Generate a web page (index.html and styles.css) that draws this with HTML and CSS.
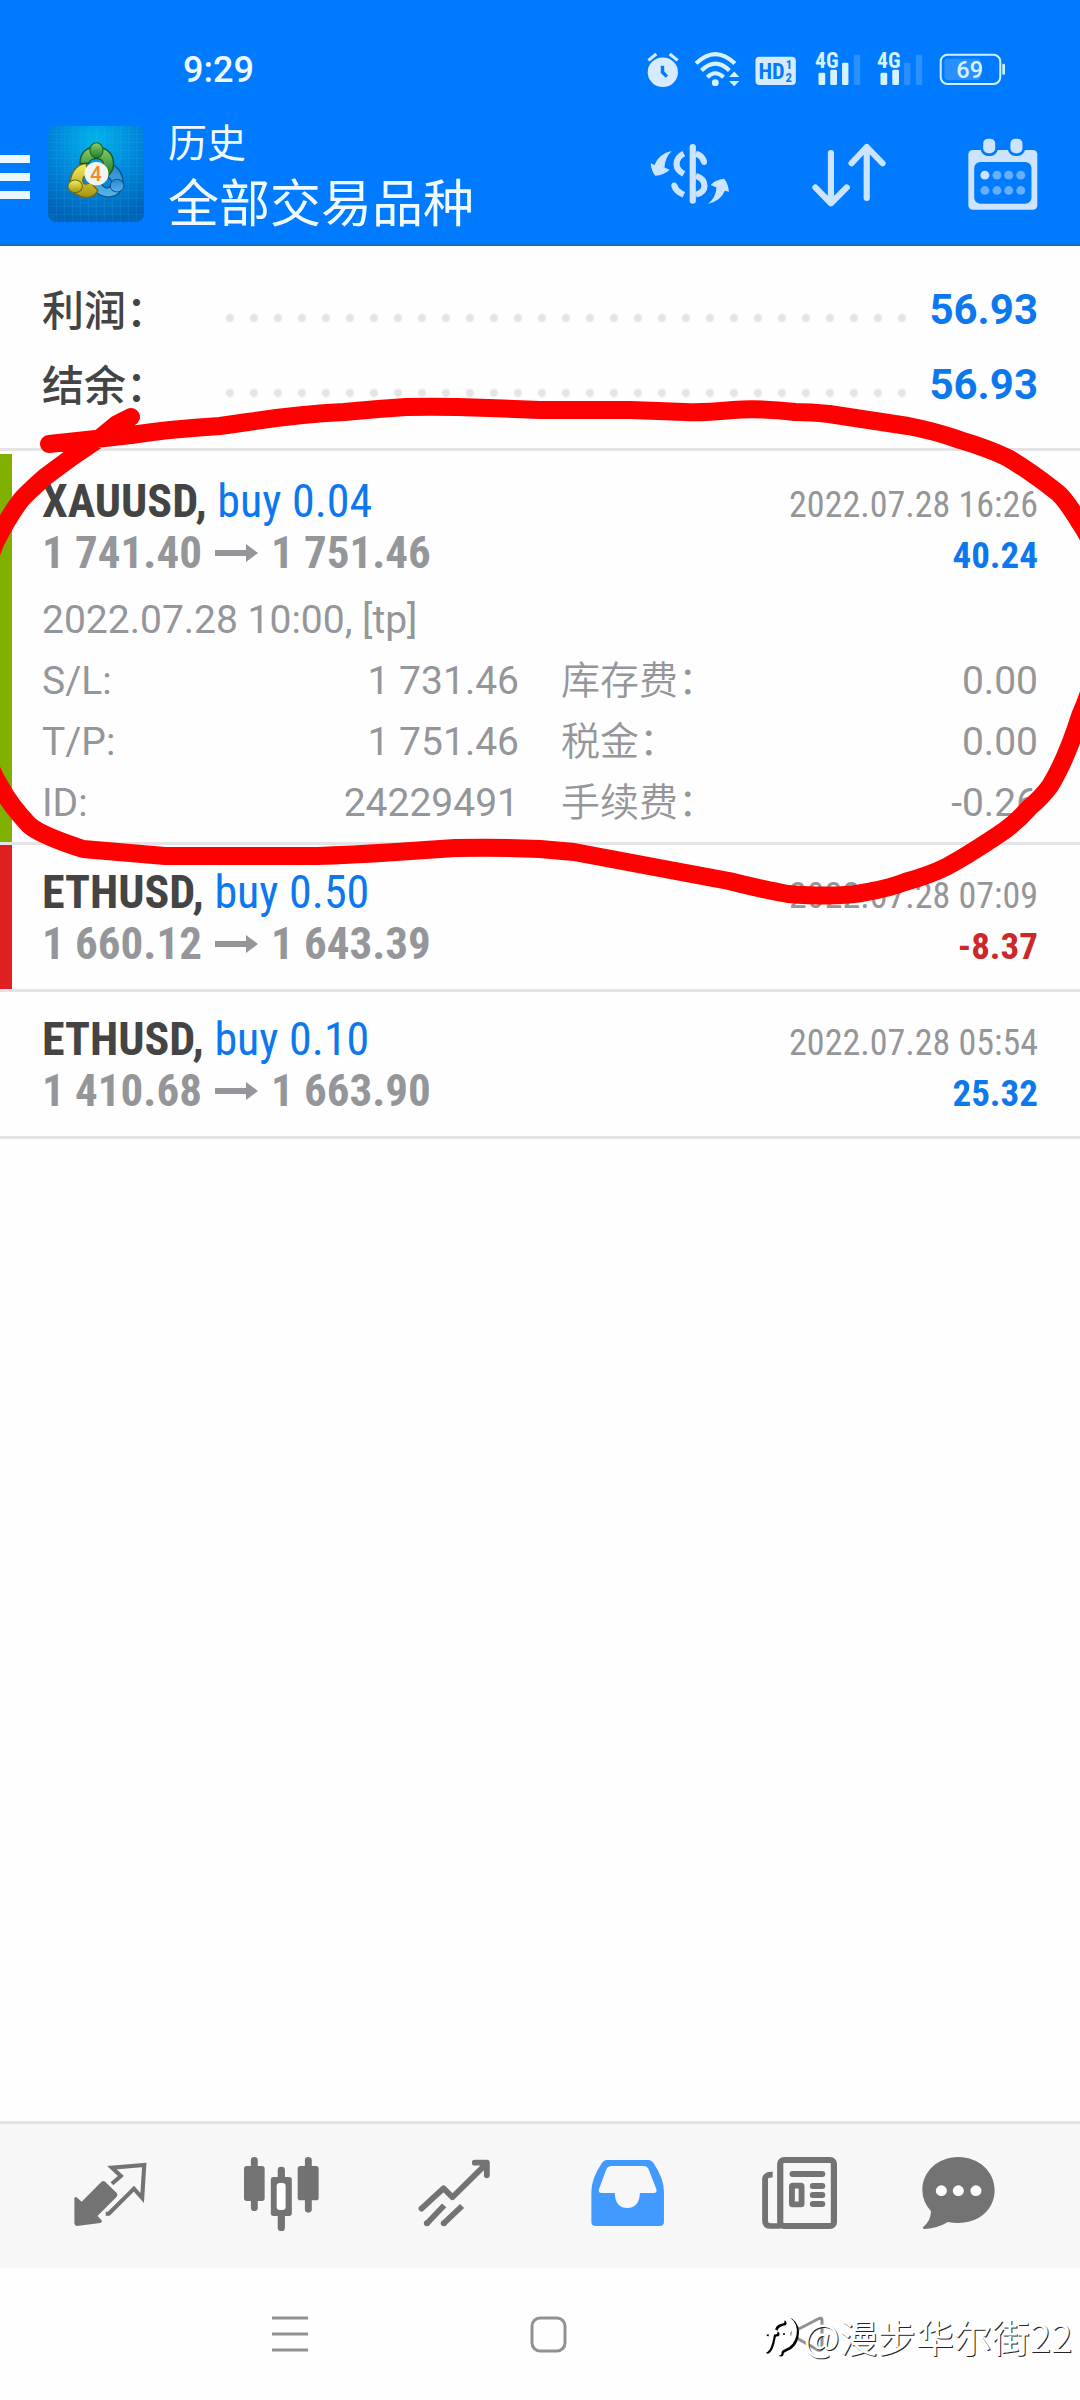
FILE: index.html
```html
<!DOCTYPE html>
<html lang="zh-CN">
<head>
    <meta charset="UTF-8" />
    <meta name="viewport" content="width=device-width, initial-scale=1.0"/>
    <title>历史</title>
    <link rel="stylesheet" href="styles.css">
</head>
<body>
<header class="header">
    <div class="status-bar">
        <time class="clock">9:29</time>
        <div class="status-icons">
            <svg width="32" height="35" viewBox="311 154 93 104" preserveAspectRatio="none">
                <circle cx="357" cy="214" r="44" fill="#d6ebff"/>
                <path d="M315 179L338 160M400 179L377 160" stroke="#d6ebff" stroke-width="9"/>
                <path d="M356 195V214L369 227" fill="none" stroke="#007aff" stroke-width="10"/>
            </svg>
            <svg width="44" height="35" viewBox="450 154 128 104" preserveAspectRatio="none">
                <g fill="none" stroke="#d6f2ff" stroke-width="12">
                    <path d="M453 188Q509 132 566 188"/>
                    <path d="M469 209Q509 168 550 209"/>
                    <path d="M486 229Q509 205 533 229"/>
                </g>
                <circle cx="509" cy="245" r="10" fill="#d6f2ff"/>
                <path d="M549 228L564 212L579 228ZM549 240L564 256L579 240Z" fill="#d6f2ff"/>
            </svg>
            <svg width="44" height="35" viewBox="621 154 128 104">
                <rect x="621" y="168" width="120" height="84" rx="12" fill="#d6ebff"/>
                <g class="hd-text">
                    <text x="630" y="233" font-size="66">HD</text>
                    <text x="711" y="206" font-size="38">1</text>
                    <text x="710" y="242" font-size="38">2</text>
                </g>
            </svg>
            <svg width="46" height="35" viewBox="793 154 134 104">
                <text class="net-text" x="792" y="202" font-size="64">4G</text>
                <g fill="#d6f2ff">
                    <rect x="802" y="216" width="20" height="36" rx="4"/>
                    <rect x="837" y="207" width="20" height="45" rx="4"/>
                    <rect x="872" y="186" width="19" height="66" rx="4"/>
                </g>
                <rect x="907" y="162" width="19" height="90" rx="4" fill="#2b90ff"/>
            </svg>
            <svg width="46" height="35" viewBox="793 154 134 104">
                <text class="net-text" x="792" y="202" font-size="64">4G</text>
                <g fill="#d6f2ff">
                    <rect x="802" y="216" width="20" height="36" rx="4"/>
                    <rect x="837" y="207" width="20" height="45" rx="4"/>
                </g>
                <g fill="#2b90ff">
                    <rect x="872" y="186" width="19" height="66" rx="4"/>
                    <rect x="907" y="162" width="19" height="90" rx="4"/>
                </g>
            </svg>
            <svg width="67" height="35" viewBox="1156 154 195 104">
                <rect x="1159" y="162" width="177" height="87" rx="20" fill="none" stroke="#d0f0ff" stroke-width="6"/>
                <rect x="1170" y="174" width="108" height="63" rx="10" fill="#2b90ff"/>
                <rect x="1342" y="189" width="8" height="33" rx="4" fill="#d0f0ff"/>
                <text class="battery-text" x="1245" y="231" font-size="70">69</text>
            </svg>
        </div>
    </div>

    <div class="app-bar">
        <button class="btn-menu" aria-label="菜单"><span></span><span></span><span></span></button>
        <svg class="app-icon" viewBox="139 381 288 288">
            <defs>
                <radialGradient id="bg" cx="50%" cy="15%" r="85%">
                    <stop offset="0" stop-color="#00b4ea"/>
                    <stop offset="0.5" stop-color="#0089dc"/>
                    <stop offset="1" stop-color="#0064b8"/>
                </radialGradient>
                <linearGradient id="green" x2="0" y2="1">
                    <stop offset="0" stop-color="#8fd06a"/>
                    <stop offset="1" stop-color="#1d7d2a"/>
                </linearGradient>
                <linearGradient id="yellow" x2="0" y2="1">
                    <stop offset="0" stop-color="#f6ee62"/>
                    <stop offset="1" stop-color="#a39410"/>
                </linearGradient>
                <linearGradient id="blue" x2="0" y2="1">
                    <stop offset="0" stop-color="#2c86cc"/>
                    <stop offset="1" stop-color="#55b4ea"/>
                </linearGradient>
            </defs>
            <rect x="139" y="381" width="288" height="288" rx="24" fill="url(#bg)"/>
            <path d="M164 381V669M188 381V669M212 381V669M236 381V669M260 381V669M284 381V669M308 381V669M332 381V669M356 381V669M380 381V669M404 381V669M139 406H427M139 430H427M139 454H427M139 478H427M139 502H427M139 526H427M139 550H427M139 574H427M139 598H427M139 622H427M139 646H427" stroke="#5fd0ff" stroke-opacity="0.16" stroke-width="2"/>
            <g transform="translate(-4 0) scale(1.03 1)">
                <path d="M325 496Q358 512 358 556Q352 594 310 594Q278 590 262 556L292 550Q308 578 322 560Q330 548 314 534Z" fill="url(#blue)" stroke="#0d5796" stroke-width="4"/>
                <path d="M250 492Q205 500 202 560Q214 592 252 596Q276 594 284 574L262 550Q244 562 240 546Q240 530 254 528Z" fill="url(#yellow)" stroke="#6d6a12" stroke-width="4"/>
                <path d="M232 494Q232 446 280 444Q328 448 330 494Q328 520 314 528L300 500Q302 480 280 478Q262 480 258 492Z" fill="url(#green)" stroke="#145d26" stroke-width="4"/>
                <ellipse cx="280" cy="454" rx="19" ry="23" fill="url(#green)" stroke="#145d26" stroke-width="3"/>
                <ellipse cx="218" cy="562" rx="21" ry="19" fill="url(#yellow)" stroke="#6d6a12" stroke-width="3"/>
                <ellipse cx="340" cy="560" rx="20" ry="19" fill="url(#blue)" stroke="#0d5796" stroke-width="3"/>
                <circle cx="280" cy="524" r="35" fill="#f3f3f1"/>
            </g>
            <text class="app-icon-text" x="283" y="547" font-size="62">4</text>
        </svg>
        <div class="titles">
            <p class="section">历史</p>
            <h1 class="symbol-filter">全部交易品种</h1>
        </div>
        <div class="actions">
            <button aria-label="货币">
                <svg width="80" height="73" viewBox="320 411 232 220" preserveAspectRatio="none">
                    <g fill="none" stroke="#cce4ff" stroke-width="18">
                        <path d="M444 438V600" stroke-linecap="round"/>
                        <path d="M453 458Q472 464 477 484M390 553Q395 572 418 582"/>
                        <path d="M418 458Q397 468 397 490Q397 508 418 519M453 525Q478 533 478 555Q478 575 453 582"/>
                    </g>
                    <g fill="#cce4ff">
                        <circle cx="477" cy="484" r="8"/>
                        <circle cx="390" cy="553" r="8"/>
                        <path d="M383 450Q346 458 333 492L322 487Q324 510 335 525Q360 524 377 507L362 500Q363 470 383 450Z"/>
                        <path d="M489 609Q511 590 513 560L496 553Q510 536 535 534Q547 550 549 573L537 570Q526 600 489 609Z"/>
                    </g>
                </svg>
            </button>
            <button aria-label="排序">
                <svg width="74" height="73" viewBox="781 411 215 220" preserveAspectRatio="none" fill="none" stroke="#cce4ff" stroke-width="18" stroke-linecap="round" stroke-linejoin="round">
                    <path d="M836 456V608M791 560L836 608L882 560M940 592V438M896 487L940 438L986 487"/>
                </svg>
            </button>
            <button aria-label="日期">
                <svg width="70" height="73" viewBox="1242 411 203 220" preserveAspectRatio="none">
                    <rect x="1243" y="447" width="200" height="180" rx="13" fill="#cce4ff"/>
                    <rect x="1260" y="483" width="166" height="126" rx="18" fill="#007aff"/>
                    <g fill="#cce4ff" stroke="#007aff" stroke-width="8">
                        <rect x="1282" y="409" width="43" height="52" rx="19"/>
                        <rect x="1361" y="409" width="43" height="52" rx="19"/>
                    </g>
                    <g fill="#66afff">
                        <circle cx="1291" cy="523" r="13" fill="#cce4ff"/>
                        <circle cx="1326" cy="523" r="13"/>
                        <circle cx="1360" cy="523" r="13"/>
                        <circle cx="1395" cy="523" r="13"/>
                        <circle cx="1291" cy="569" r="13"/>
                        <circle cx="1326" cy="569" r="13"/>
                        <circle cx="1360" cy="569" r="13"/>
                        <circle cx="1395" cy="569" r="13"/>
                    </g>
                </svg>
            </button>
        </div>
    </div>
</header>

<main class="history">
    <dl class="summary">
        <div class="summary-row">
            <dt>利润：</dt>
            <dd>56.93</dd>
        </div>
        <div class="summary-row">
            <dt>结余：</dt>
            <dd>56.93</dd>
        </div>
    </dl>

    <div class="trades">
        <article class="trade trade-open trade-tp">
            <div class="trade-line">
                <h2 class="symbol">XAUUSD, <span class="side">buy 0.04</span></h2>
                <time class="date">2022.07.28 16:26</time>
            </div>
            <div class="trade-line">
                <p class="prices">1 741.40
                    <svg class="arrow" viewBox="0 0 43 18"><path d="M0 6H31V0L43 9L31 18V12H0Z"/></svg>
                    1 751.46</p>
                <p class="profit">40.24</p>
            </div>
            <p class="opened">2022.07.28 10:00, [tp]</p>
            <dl class="details">
                <div><dt>S/L:</dt><dd>1 731.46</dd></div>
                <div><dt>库存费：</dt><dd>0.00</dd></div>
                <div><dt>T/P:</dt><dd>1 751.46</dd></div>
                <div><dt>税金：</dt><dd>0.00</dd></div>
                <div><dt>ID:</dt><dd>24229491</dd></div>
                <div><dt>手续费：</dt><dd>-0.26</dd></div>
            </dl>
        </article>

        <article class="trade trade-sl">
            <div class="trade-line">
                <h2 class="symbol">ETHUSD, <span class="side">buy 0.50</span></h2>
                <time class="date">2022.07.28 07:09</time>
            </div>
            <div class="trade-line">
                <p class="prices">1 660.12
                    <svg class="arrow" viewBox="0 0 43 18"><path d="M0 6H31V0L43 9L31 18V12H0Z"/></svg>
                    1 643.39</p>
                <p class="profit loss">-8.37</p>
            </div>
        </article>

        <article class="trade">
            <div class="trade-line">
                <h2 class="symbol">ETHUSD, <span class="side">buy 0.10</span></h2>
                <time class="date">2022.07.28 05:54</time>
            </div>
            <div class="trade-line">
                <p class="prices">1 410.68
                    <svg class="arrow" viewBox="0 0 43 18"><path d="M0 6H31V0L43 9L31 18V12H0Z"/></svg>
                    1 663.90</p>
                <p class="profit">25.32</p>
            </div>
        </article>
    </div>

    <!-- hand-drawn marker around the first trade -->
    <svg class="marker" width="1080" height="920" viewBox="0 0 1080 920">
        <path d="M131 417L117 424L100 438L72 457L45 477Q26 494 21 500Q10 514 -4 541C-30 600 -34 735 0 786Q10 805 29 825Q40 835 83 849L165 856H317Q350 855 396 852L455 848Q500 847 540 849L574 852L654 867L729 881Q765 890 788 894Q840 898 867 892Q890 888 905 882Q930 875 946 867Q965 857 998 835Q1015 824 1029 808Q1042 797 1050 786Q1066 760 1080 716C1110 648 1110 565 1080 523Q1066 500 1058 493Q1030 471 1008 458Q990 449 960 440Q935 431 908 426L829 414Q810 412 795 412Q760 408 733 410Q700 413 685 412L630 410H540L489 408Q440 406 406 407Q375 409 344 412Q300 414 248 422L220 426Q170 429 131 435L96 439L49 444"/>
    </svg>
</main>

<nav class="tabs">
    <button aria-label="行情">
        <svg width="75" height="74" viewBox="208 141 218 222" preserveAspectRatio="none">
            <path d="M215 265Q216 258 223 263L236 275L293 216Q299 210 305 216L338 249Q342 254 338 260L282 318L294 331Q297 336 290 339L222 348Q215 347 215 340Z" fill="#737373"/>
            <path d="M324 221L350 198L324 173L418 165L412 264L388 236L315 311H306" fill="none" stroke="#737373" stroke-width="12"/>
        </svg>
    </button>
    <button aria-label="图表">
        <svg width="75" height="74" viewBox="709 141 218 222" preserveAspectRatio="none" fill="#737373">
            <rect x="709" y="168" width="60" height="105" rx="8"/>
            <rect x="729" y="141" width="20" height="162" rx="10"/>
            <rect x="865" y="168" width="61" height="103" rx="8"/>
            <rect x="886" y="141" width="20" height="167" rx="10"/>
            <rect x="807" y="170" width="21" height="193" rx="10"/>
            <rect x="787" y="201" width="61" height="117" rx="8"/>
            <rect x="804" y="219" width="26" height="81" rx="9" fill="#fff"/>
        </svg>
    </button>
    <button aria-label="交易">
        <svg width="75" height="74" viewBox="1208 141 218 222" preserveAspectRatio="none" fill="none" stroke="#737373" stroke-width="17">
            <path d="M1221 296L1285 235L1311 262L1411 160M1376 158H1411V196" stroke-linecap="round" stroke-linejoin="round"/>
            <path d="M1237 340L1287 286M1286 340L1339 288"/>
            <g fill="#737373" stroke="none">
                <circle cx="1237" cy="340" r="9"/>
                <circle cx="1286" cy="340" r="9"/>
            </g>
        </svg>
    </button>
    <button aria-label="历史" aria-current="page">
        <svg width="75" height="74" viewBox="142 141 218 222" preserveAspectRatio="none">
            <path d="M190 150H313Q321 150 326 158Q357 205 357 245V335Q357 348 344 348H159Q146 348 146 335V245Q146 205 177 158Q182 150 190 150Z" fill="#429aff"/>
            <path d="M206 168H298Q308 168 312 177L335 238Q338 249 327 249H287Q286 293 250 294Q215 293 214 249H176Q165 249 168 238L190 177Q194 168 206 168Z" fill="#f7f7f7"/>
        </svg>
    </button>
    <button aria-label="新闻">
        <svg width="75" height="74" viewBox="646 141 218 222" preserveAspectRatio="none" fill="none" stroke="#737373">
            <rect x="699" y="150" width="156" height="198" rx="11" stroke-width="18"/>
            <path d="M677 194Q655 193 655 208V332Q655 348 672 348H700" stroke-width="17"/>
            <path d="M735 192H821M794 228H821M794 255H821M794 282H821" stroke-width="18" stroke-linecap="round"/>
            <rect x="733" y="227" width="28" height="56" rx="2" stroke-width="17"/>
        </svg>
    </button>
    <button aria-label="聊天">
        <svg width="101" height="74" viewBox="1108 141 292 222" preserveAspectRatio="none">
            <path d="M1213 141C1273 141 1318 186 1318 240C1318 298 1273 339 1213 339Q1197 339 1183 336Q1152 355 1117 357Q1107 356 1112 350Q1133 334 1134 304Q1109 275 1109 240C1109 186 1153 141 1213 141Z" fill="#737373"/>
            <g fill="#fff">
                <circle cx="1164" cy="242" r="16"/>
                <circle cx="1213" cy="242" r="16"/>
                <circle cx="1264" cy="242" r="16"/>
            </g>
        </svg>
    </button>
</nav>

<footer class="system-nav">
    <button aria-label="最近任务">
        <svg width="36" height="36" viewBox="0 0 36 36"><path d="M0 2H36M0 18H36M0 34H36"/></svg>
    </button>
    <button aria-label="主屏幕">
        <svg width="36" height="36" viewBox="0 0 36 36"><rect x="2" y="2" width="33" height="33" rx="8"/></svg>
    </button>
    <button aria-label="返回">
        <svg width="36" height="36" viewBox="0 0 36 36"><path d="M34 4V32Q34 35 30 34L5 20Q2 18 5 16L30 3Q34 1 34 4Z"/></svg>
    </button>
    <div class="watermark">
        <svg width="36" height="40" viewBox="0 0 36 40">
            <g fill="none" stroke-width="5" stroke-linecap="round">
                <path class="logo-shadow" d="M4 35Q7 33 9 22L11 14Q13 8 20 7M5 18H13M27 5Q34 10 32 21Q30 30 22 33Q17 35 17 38"/>
                <path class="logo-face" d="M2 34Q5 32 7 21L9 12Q11 6 18 5M3 16H11M25 4Q32 9 30 19Q28 28 20 31Q15 33 15 37"/>
                <path class="logo-shadow" d="M20 18H20" stroke-width="2"/>
            </g>
        </svg>
        <span>@漫步华尔街22</span>
    </div>
</footer>
</body>
</html>
```
FILE: styles.css
```css
* {
    box-sizing: border-box;
}

body {
    font-family: Roboto, "Noto Sans CJK SC", sans-serif;
    background-color: #fefefe;
    color: #95969a;
    margin: 0;
    min-height: 100vh;
    display: flex;
    flex-direction: column;
    position: relative;
    overflow-x: hidden;
}

h1, h2, p, dl, dd {
    margin: 0;
    font-weight: normal;
}

button {
    background: none;
    border: none;
    padding: 0;
    cursor: pointer;
}

svg {
    display: block;
    overflow: visible;
}

/* header */
.header {
    background-color: #007aff;
    border-bottom: 2px solid #1a6fc4;
    color: #f0fbff;
}

.status-bar {
    display: flex;
    justify-content: space-between;
    align-items: center;
    height: 104px;
    padding: 35px 74px 0 183px;
}

.clock {
    font-size: 36px;
    font-weight: 500;
}

.status-icons {
    display: flex;
    gap: 16px;
}

.hd-text {
    font-family: "Roboto Condensed", "Liberation Sans Narrow", sans-serif;
    font-weight: bold;
    fill: #007aff;
}

.net-text {
    font-family: "Roboto Condensed", "Liberation Sans Narrow", sans-serif;
    font-weight: bold;
    fill: #d6f2ff;
}

.battery-text {
    font-weight: 500;
    fill: #d6f2ff;
    text-anchor: middle;
}

.app-icon-text {
    font-weight: 500;
    fill: #f08a24;
    text-anchor: middle;
}

.app-bar {
    display: flex;
    align-items: center;
    height: 140px;
    padding-right: 42px;
}

.btn-menu {
    display: flex;
    flex-direction: column;
    gap: 10px;
    width: 30px;
    margin-right: 18px;
    padding-top: 6px;
}

.btn-menu span {
    height: 8px;
    background-color: #ecf8ff;
}

.app-icon {
    width: 96px;
    height: 96px;
    margin-right: 24px;
}

.titles {
    flex: 1;
    padding-top: 6px;
}

.section {
    font-size: 39px;
    line-height: 56px;
    font-weight: 400;
}

.symbol-filter {
    font-size: 51px;
    line-height: 66px;
    font-weight: 400;
}

.actions {
    display: flex;
    gap: 82px;
}

/* totals */
.history {
    flex: 1;
}

.summary {
    padding: 26px 42px;
    border-bottom: 3px solid #e4e4e6;
}

.summary-row {
    display: flex;
    align-items: center;
    height: 75px;
    font-size: 42px;
}

.summary-row dt {
    width: 176px;
    padding-bottom: 4px;
    font-weight: 500;
    color: #444;
}

.summary-row dd {
    flex: 1;
    display: flex;
    align-items: center;
    justify-content: space-between;
    font-weight: bold;
    color: #0d78ee;
}

.summary-row dd::before {
    content: "";
    width: 696px;
    height: 10px;
    margin-top: 16px;
    background: radial-gradient(circle at 12px 5px, #e4e4e6 0 3px, transparent 5px) 0 0 / 24px 10px;
}

/* trades */
.trades {
    padding-top: 3px;
}

.trade {
    padding: 22px 42px 20px;
    border-bottom: 3px solid #e4e4e6;
}

.trade-open {
    padding-bottom: 8px;
}

.trade-tp {
    box-shadow: inset 12px 0 #80b000;
}

.trade-sl {
    box-shadow: inset 12px 0 #e02020;
}

.trade-line {
    display: flex;
    justify-content: space-between;
    align-items: baseline;
    height: 51px;
    line-height: 51px;
    font-family: "Roboto Condensed", "Liberation Sans Narrow", sans-serif;
    font-size: 46px;
}

.symbol {
    font-size: 46px;
    font-weight: bold;
    color: #444;
}

.side {
    font-weight: normal;
    color: #0d78ee;
}

.date {
    font-size: 36px;
}

.prices {
    display: flex;
    align-items: center;
    gap: 13px;
    font-size: 45px;
    font-weight: bold;
}

.arrow {
    width: 43px;
    height: 18px;
    fill: #95969a;
}

.profit {
    font-size: 37px;
    font-weight: bold;
    color: #0d78ee;
}

.loss {
    color: #cc2828;
}

.opened {
    margin-top: 12px;
    font-size: 39px;
    line-height: 61px;
}

.details {
    display: grid;
    grid-template-columns: 1fr 1fr;
    column-gap: 42px;
    font-size: 39px;
    line-height: 61px;
}

.details div {
    display: flex;
    justify-content: space-between;
    height: 61px;
}

.details div:nth-child(even) dt {
    font-weight: 350;
}

.marker {
    position: absolute;
    left: 0;
    top: 0;
    pointer-events: none;
    fill: none;
    stroke: #f00;
    stroke-width: 18px;
    stroke-linecap: round;
    stroke-linejoin: round;
}

/* bottom bars */
.tabs {
    display: grid;
    grid-template-columns: repeat(6, 1fr);
    height: 147px;
    padding: 0 21px 4px 23px;
    background-color: #f7f7f7;
    border-top: 3px solid #e4e4e6;
}

.tabs button {
    display: flex;
    align-items: center;
    justify-content: center;
}

.system-nav {
    position: relative;
    display: grid;
    grid-template-columns: repeat(3, 1fr);
    height: 132px;
    padding: 0 145px 0 161px;
}

.system-nav button {
    display: flex;
    align-items: center;
    justify-content: center;
}

.system-nav button svg {
    fill: none;
    stroke: #919191;
    stroke-width: 3px;
}

.watermark {
    position: absolute;
    right: 8px;
    bottom: 36px;
    display: flex;
    align-items: center;
    gap: 4px;
    font-family: "Noto Sans CJK SC", sans-serif;
    font-size: 38px;
    line-height: 56px;
    color: #fff;
    text-shadow: 1px 1px 0 #222;
}

.logo-shadow {
    stroke: #000;
}

.logo-face {
    stroke: #fff;
}
```
